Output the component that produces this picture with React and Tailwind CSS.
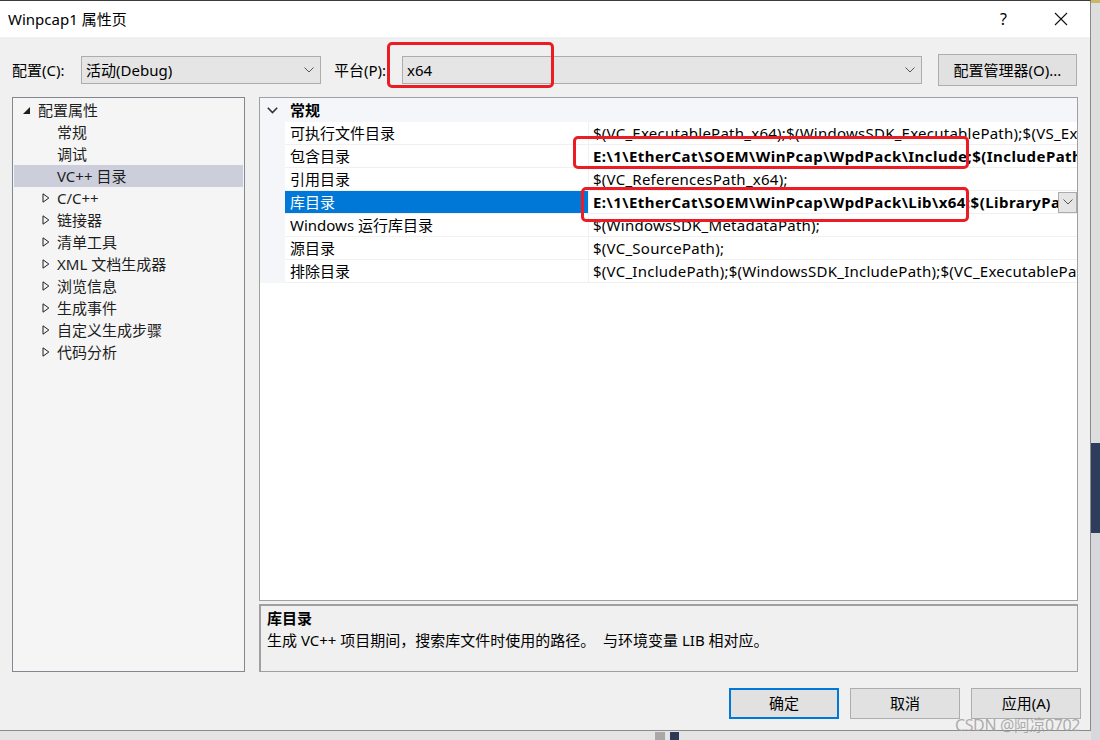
const treeItems = [
  { label: 'C/C++', kids: true },
  { label: '链接器', kids: true },
  { label: '清单工具', kids: true },
  { label: 'XML 文档生成器', kids: true },
  { label: '浏览信息', kids: true },
  { label: '生成事件', kids: true },
  { label: '自定义生成步骤', kids: true },
  { label: '代码分析', kids: true },
];

const props = [
  { name: '可执行文件目录', value: '$(VC_ExecutablePath_x64);$(WindowsSDK_ExecutablePath);$(VS_ExecutablePath);$(MSBuild_ExecutablePath);$(FxCopDir);$(PATH);' },
  { name: '包含目录', value: 'E:\\1\\EtherCat\\SOEM\\WinPcap\\WpdPack\\Include;$(IncludePath)', bold: true },
  { name: '引用目录', value: '$(VC_ReferencesPath_x64);' },
  { name: '库目录', value: 'E:\\1\\EtherCat\\SOEM\\WinPcap\\WpdPack\\Lib\\x64;$(LibraryPath)', bold: true, selected: true },
  { name: 'Windows 运行库目录', value: '$(WindowsSDK_MetadataPath);' },
  { name: '源目录', value: '$(VC_SourcePath);' },
  { name: '排除目录', value: '$(VC_IncludePath);$(WindowsSDK_IncludePath);$(VC_ExecutablePath_x64);$(VC_LibraryPath_x64);' },
];

function Chevron({ className = '' }) {
  return (
    <svg width="10" height="6" viewBox="0 0 10 6" className={className}>
      <path d="M0.5 0.5 L5 5 L9.5 0.5" fill="none" stroke="#555" strokeWidth="1" />
    </svg>
  );
}

function Combo({ value, className = '' }) {
  return (
    <div className={`h-[28px] flex items-center bg-[#e5e5e5] border border-[#adadad] pl-[4px] pr-[6px] ${className}`}>
      <span className="flex-1 text-[15px] leading-none">{value}</span>
      <Chevron />
    </div>
  );
}

function Closed() {
  return (
    <svg width="8" height="10" viewBox="0 0 8 10">
      <path d="M1 0.8 L6.8 5 L1 9.2 Z" fill="none" stroke="#1e1e1e" strokeWidth="1" />
    </svg>
  );
}

function RedBox({ className }) {
  return <div className={`absolute border-[3px] border-[#ec1c24] rounded-[5px] ${className}`} />;
}

export default function App() {
  return (
    <div className="relative w-[1100px] h-[740px] overflow-hidden flex bg-[#e4e4e4] text-black font-['Noto_Sans','Noto_Sans_CJK_SC',sans-serif]">
      {/* dialog */}
      <div className="w-[1091px] h-[731px] flex flex-col bg-[#f0f0f0] border-t border-t-[#3c3c3c] border-r border-b border-[#8a8a8a]">
        {/* title */}
        <div className="h-[36px] bg-white flex items-center pl-[8px]">
          <span className="flex-1 text-[15px]">Winpcap1 属性页</span>
          <span className="text-[16px] mr-[47px]">?</span>
          <svg width="14" height="14" viewBox="0 0 14 14" className="mr-[22px]">
            <path d="M1 1 L13 13 M13 1 L1 13" stroke="#111" strokeWidth="1.1" />
          </svg>
        </div>

        {/* config row */}
        <div className="mt-[17px] h-[32px] flex items-center pl-[12px] text-[15px]">
          <span className="w-[69px]">配置(C):</span>
          <Combo value="活动(Debug)" className="w-[240px]" />
          <span className="ml-[13px] w-[68px]">平台(P):</span>
          <Combo value="x64" className="w-[520px]" />
          <div className="ml-[16px] w-[139px] h-[32px] flex items-center justify-center bg-[#e1e1e1] border border-[#adadad]">
            配置管理器(O)...
          </div>
        </div>

        {/* main */}
        <div className="mt-[11px] flex pl-[12px]">
          {/* tree */}
          <div className="w-[233px] h-[575px] border border-[#828790] bg-[#f5f5f5] pt-[1px] px-[1px] text-[15px] text-[#1e1e1e]">
            <div className="h-[22px] flex items-center">
              <svg width="7" height="7" viewBox="0 0 7 7" className="ml-[9px] mr-[8px]">
                <path d="M7 0 L7 7 L0 7 Z" fill="#1e1e1e" />
              </svg>
              <span>配置属性</span>
            </div>
            <div className="h-[22px] flex items-center pl-[43px]">常规</div>
            <div className="h-[22px] flex items-center pl-[43px]">调试</div>
            <div className="h-[22px] flex items-center pl-[43px] bg-[#cccedb]">VC++ 目录</div>
            {treeItems.map((t) => (
              <div key={t.label} className="h-[22px] flex items-center pl-[28px]">
                <Closed />
                <span className="ml-[7px]">{t.label}</span>
              </div>
            ))}
          </div>

          {/* right column */}
          <div className="ml-[14px] w-[819px] flex flex-col gap-[3px]">
            <div className="h-[504px] border border-[#a0a0a0] bg-white text-[15px] overflow-hidden">
              <div className="h-[24px] flex items-center bg-[#f4f6fa]">
                <svg width="11" height="7" viewBox="0 0 11 7" className="ml-[7px]">
                  <path d="M0.8 0.8 L5.5 5.5 L10.2 0.8" fill="none" stroke="#333" strokeWidth="1.6" />
                </svg>
                <span className="ml-[12px] font-bold">常规</span>
              </div>
              {props.map((p) => (
                <div key={p.name} className="h-[23px] flex">
                  <div className="w-[25px] shrink-0 bg-[#f4f6fa]" />
                  <div
                    className={`w-[303px] shrink-0 pl-[5px] flex items-center border-b border-[#f0f0f0] ${
                      p.selected ? 'bg-[#0078d7] text-white' : ''
                    }`}
                  >
                    {p.name}
                  </div>
                  <div className="flex-1 min-w-0 flex items-center border-l border-b border-[#f0f0f0] pl-[4px] overflow-hidden">
                    <span
                      className={`whitespace-nowrap flex-1 overflow-hidden ${
                        p.bold ? 'font-bold tracking-[0.45px]' : 'tracking-[0.25px]'
                      }`}
                    >
                      {p.value}
                    </span>
                    {p.selected && (
                      <div className="w-[19px] h-[21px] shrink-0 flex items-center justify-center bg-[#e5e5e5] border border-[#acacac]">
                        <Chevron />
                      </div>
                    )}
                  </div>
                </div>
              ))}
            </div>

            <div className="h-[68px] border border-[#a0a0a0] border-t-2 border-l-2 bg-[#f0f0f0] pl-[6px] pt-[1px] text-[15px]">
              <div className="h-[22px] flex items-center font-bold">库目录</div>
              <div className="h-[22px] flex items-center whitespace-pre">生成 VC++ 项目期间，搜索库文件时使用的路径。  与环境变量 LIB 相对应。</div>
            </div>
          </div>
        </div>

        {/* buttons */}
        <div className="mt-[16px] flex justify-end gap-[11px] pr-[9px] text-[15px]">
          <div className="w-[110px] h-[31px] flex items-center justify-center bg-[#e1e1e1] border-2 border-[#0078d7]">确定</div>
          <div className="w-[110px] h-[31px] flex items-center justify-center bg-[#e1e1e1] border border-[#adadad]">取消</div>
          <div className="w-[110px] h-[31px] flex items-center justify-center bg-[#e1e1e1] border border-[#adadad]">应用(A)</div>
        </div>
      </div>

      {/* background app strip on the right */}
      <div className="w-[9px] flex flex-col">
        <div className="h-[3px] bg-[#c9b76a]" />
        <div className="h-[440px] bg-[#dedede]" />
        <div className="h-[90px] bg-[#2f3d5c]" />
        <div className="flex-1 bg-[#d8d8dc]" />
      </div>

      {/* bottom strip behind dialog */}
      <div className="absolute left-[655px] top-[732px] w-[10px] h-[8px] bg-[#a8a8a8]" />
      <div className="absolute left-[670px] top-[732px] w-[9px] h-[8px] bg-[#2d3a55]" />

      {/* annotations */}
      <RedBox className="left-[387px] top-[42px] w-[167px] h-[46px]" />
      <RedBox className="left-[573px] top-[136px] w-[396px] h-[33px]" />
      <RedBox className="left-[581px] top-[187px] w-[388px] h-[35px]" />

      <div className="absolute left-[955px] top-[713px] text-[16px] text-[#9a9a9a]/80 tracking-[-0.4px] whitespace-nowrap">
        CSDN @阿凉0702
      </div>
    </div>
  );
}
